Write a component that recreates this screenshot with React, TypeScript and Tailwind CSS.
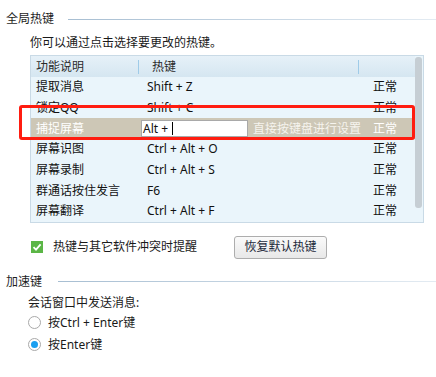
import React from "react";

const rows = [
  { name: "提取消息", key: "Shift + Z" },
  { name: "锁定QQ", key: "Shift + C" },
  { name: "捕捉屏幕", key: "Alt + ", editing: true },
  { name: "屏幕识图", key: "Ctrl + Alt + O" },
  { name: "屏幕录制", key: "Ctrl + Alt + S" },
  { name: "群通话按住发言", key: "F6" },
  { name: "屏幕翻译", key: "Ctrl + Alt + F" },
];

function SectionTitle({ title, lineGap }: { title: string; lineGap: string }) {
  return (
    <div className="flex items-center h-[18px] pl-[6px]">
      <span className="text-[12px] text-[#1e1e1e] leading-[18px]">{title}</span>
      <div className={`flex-1 h-px bg-gradient-to-r from-[#a7bed2] to-[#e3ebf2] ${lineGap}`} />
    </div>
  );
}

function Radio({ checked, label }: { checked?: boolean; label: string }) {
  return (
    <div className="flex items-center h-[22px] pl-[28px]">
      <div className="w-[13px] h-[13px] rounded-full border border-[#a9a9a9] bg-white flex items-center justify-center">
        {checked && <div className="w-[7px] h-[7px] rounded-full bg-[#1a9ff0]" />}
      </div>
      <span className="ml-[7px] text-[12px] text-[#1a1a1a]">{label}</span>
    </div>
  );
}

export default function App() {
  return (
    <div className="relative w-[436px] h-[377px] bg-white overflow-hidden font-['Noto_Sans','Noto_Sans_CJK_SC',sans-serif]">
      <div className="pt-[10px]">
        <SectionTitle title="全局热键" lineGap="ml-[14px]" />
      </div>

      <div className="mt-[7px] pl-[30px] text-[12px] leading-[16px] text-[#1a1a1a]">
        你可以通过点击选择要更改的热键。
      </div>

      {/* hotkey table */}
      <div className="mt-[4px] ml-[30px] w-[394px] border border-[#c9dae6] bg-[#eaf5fb] flex">
        <div className="flex-1">
          <div className="h-[21px] flex items-center text-[12px] text-[#2a2a2a] bg-gradient-to-b from-[#e6f1f8] to-[#d5e6f1]">
            <div className="w-[107px] pl-[5px]">功能说明</div>
            <div className="w-px h-[14px] bg-[#9fcbe8]" />
            <div className="w-[219px] pl-[13px]">热键</div>
            <div className="w-px h-[14px] bg-[#9fcbe8]" />
          </div>
          {rows.map((r) =>
            r.editing ? (
              <div key={r.name} className="h-[20.7px] flex items-center text-[12px] bg-[#cdc7b6] text-white">
                <div className="w-[110px] pl-[5px]">{r.name}</div>
                <div className="w-[107px] h-[17px] bg-white border border-[#a9a9a9] flex items-center pl-[1px] text-[#111]">
                  <span className="whitespace-pre">{r.key}</span>
                  <span className="w-px h-[13px] bg-black ml-[1px]" />
                </div>
                <div className="w-[125px] pl-[5px] text-[#f6f4ee]">直接按键盘进行设置</div>
                <div>正常</div>
              </div>
            ) : (
              <div key={r.name} className="h-[20.7px] flex items-center text-[12px] text-[#111]">
                <div className="w-[108px] pl-[5px]">{r.name}</div>
                <div className="w-[234px] pl-[8px]">{r.key}</div>
                <div>正常</div>
              </div>
            )
          )}
        </div>
        <div className="w-[8px] pt-px">
          <div className="w-[7px] h-[151px] rounded-[3px] bg-[#c6ced4]" />
        </div>
      </div>

      {/* options row */}
      <div className="mt-[13px] flex items-center h-[23px]">
        <div className="w-[234px] flex items-center pl-[31px]">
          <div className="w-[12px] h-[12px] bg-[#5bb646] flex items-center justify-center">
            <svg width="10" height="10" viewBox="0 0 10 10">
              <path d="M1.5 5.2 L4 7.6 L8.6 2.4" fill="none" stroke="white" strokeWidth="1.8" />
            </svg>
          </div>
          <span className="ml-[10px] text-[12px] text-[#1a1a1a]">热键与其它软件冲突时提醒</span>
        </div>
        <button className="w-[93px] h-[23px] rounded-[3px] border border-[#adadad] bg-gradient-to-b from-[#fafafa] to-[#e8e8e8] text-[12px] text-[#1c2a3a]">
          恢复默认热键
        </button>
      </div>

      <div className="mt-[14px]">
        <SectionTitle title="加速键" lineGap="ml-[16px]" />
      </div>

      <div className="mt-[4px] pl-[28px] text-[12px] leading-[16px] text-[#1a1a1a]">
        会话窗口中发送消息:
      </div>
      <div className="mt-[1px]">
        <Radio label="按Ctrl + Enter键" />
        <Radio label="按Enter键" checked />
      </div>

      {/* red annotation frame */}
      <div className="absolute left-[19px] top-[105px] w-[396px] h-[35px] border-[3px] border-[#ff1c10] rounded-[3px] pointer-events-none" />
    </div>
  );
}
